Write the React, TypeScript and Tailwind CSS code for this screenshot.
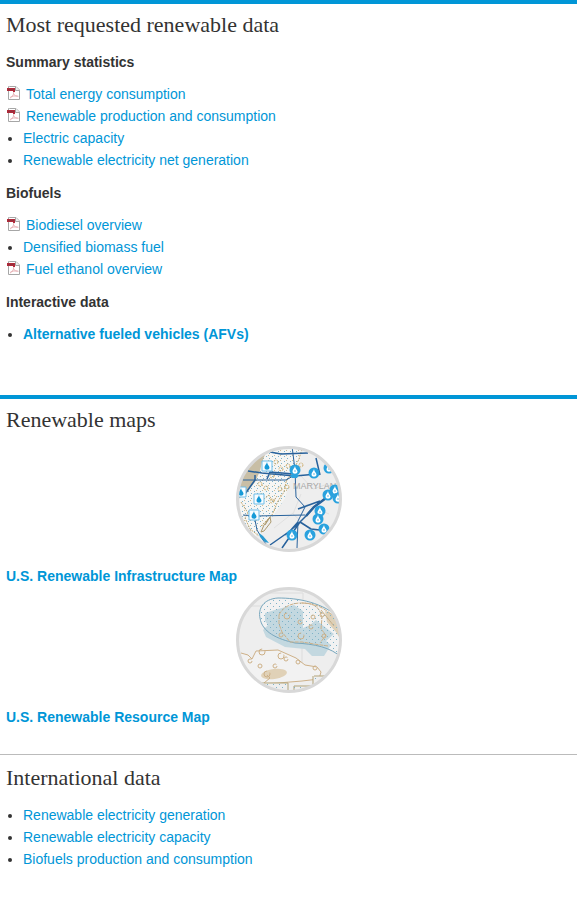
import type { ReactNode } from "react";

type LinkItem = { label: string; pdf?: boolean; bold?: boolean };

const summary: LinkItem[] = [
  { label: "Total energy consumption", pdf: true },
  { label: "Renewable production and consumption", pdf: true },
  { label: "Electric capacity" },
  { label: "Renewable electricity net generation" },
];
const biofuels: LinkItem[] = [
  { label: "Biodiesel overview", pdf: true },
  { label: "Densified biomass fuel" },
  { label: "Fuel ethanol overview", pdf: true },
];
const interactive: LinkItem[] = [{ label: "Alternative fueled vehicles (AFVs)", bold: true }];
const international: LinkItem[] = [
  { label: "Renewable electricity generation" },
  { label: "Renewable electricity capacity" },
  { label: "Biofuels production and consumption" },
];

function PdfIcon() {
  return (
    <svg className="h-4 w-4 shrink-0" viewBox="0 0 16 16" aria-hidden="true">
      <path d="M3.500.5h6.500l3.500 3.500v9.500h-11V.5z" fill="#fff" stroke="#a6a6a6" />
      <path d="M9.500.5v4h4" fill="#eee" stroke="#a6a6a6" />
      <path d="M4 12c2-.8 3.600-2.500 3.800-6M7.500 7.500c.8 2 2.200 2.800 5 2.800M4.500 11c2-1 4-1.200 7-1" fill="none" stroke="#e9b4b8" />
      <path d="M1 2h8v4H7V5H1z" fill="#b02a3a" />
      <path d="M2 3.500h6" stroke="#93303c" />
    </svg>
  );
}

function LinkList({ items }: { items: LinkItem[] }) {
  return (
    <ul>
      {items.map((item) => (
        <li key={item.label} className="flex items-center">
          {item.pdf ? (
            <span className="flex w-5 shrink-0">
              <PdfIcon />
            </span>
          ) : (
            <span className="flex w-[17px] shrink-0 pl-0.5">
              <span className="mt-0.5 h-1 w-1 rounded-full bg-[#333]" />
            </span>
          )}
          <a href="#" className={item.bold ? "font-bold text-[#0096d7]" : "text-[#0096d7]"}>
            {item.label}
          </a>
        </li>
      ))}
    </ul>
  );
}

function Heading({ children }: { children: ReactNode }) {
  return (
    <h2 className="font-['Liberation_Serif',serif] text-[22px] leading-7">{children}</h2>
  );
}

function Group({ title, items }: { title: string; items: LinkItem[] }) {
  return (
    <div>
      <h3 className="mb-2.5 font-bold">{title}</h3>
      <LinkList items={items} />
    </div>
  );
}

function MapLink({ label, children }: { label: string; children: ReactNode }) {
  return (
    <a href="#" className="font-bold leading-[21px] text-[#0096d7]">
      <span className="mb-3.5 flex justify-center">{children}</span>
      {label}
    </a>
  );
}

const flame = "M0-4C-.3-2-2.5-.5-2.500 1.500c0 3 5 3 5 0C2.500 0 .4-1 0-4z";
const plants = [[59, 24], [78, 27], [93, 22], [99, 44], [92, 49], [102, 52], [84, 65], [82, 73], [88, 83], [74, 89], [56, 89]];
const stations = [[31, 20], [5, 46], [23, 53], [18, 69]];
const infraRings = [[40, 16], [45, 23], [52, 20], [36, 30], [44, 43], [30, 42], [51, 41], [24, 38], [36, 55], [65, 19]];

function InfrastructureMap() {
  return (
    <svg className="size-[106px]" viewBox="0 0 106 106" role="img" aria-label="Infrastructure map preview">
      <defs>
        <clipPath id="infra-clip"><circle cx="53" cy="53" r="51" /></clipPath>
        <pattern id="infra-dots" width="6" height="5" patternUnits="userSpaceOnUse">
          <path d="M0 0h1v1H0zM3 2h1v1H3z" fill="#7db3ca" />
          <path d="M2 4h1v1H2z" fill="#cfbd98" />
        </pattern>
      </defs>
      <g clipPath="url(#infra-clip)">
        <path d="M0 0h106v106H0z" fill="#eee" />
        <path d="M65 30l12 13 12-4 17 3M65 48l-8 20 18 16 20 2M38 82l19-15M70 58l23 10" fill="none" stroke="#e0e0e0" />
        <path d="M30 0h37l-5 22-8 13-5 17-11 17-13 12-7 12H4V31h16z" fill="#f6f6f4" />
        <path d="M30 0h37l-5 22-8 13-5 17-11 17-13 12-7 12H4V31h16z" fill="url(#infra-dots)" />
        <path d="M2 28L30 6l-4 10-2 9-5 11-10 13-7 4z" fill="#c8bea5" />
        <path d="M66 3l-3 10-5 10-8 13-2 10-6 9-6 14-11 11M5 56l7 11-3 5 5 11 9 7M25 47l3 6 5-4 4 7 4-6" fill="none" stroke="#c2a873" strokeDasharray="2 1" />
        <path d="M34 71l-6 8-3 7 3-1 7-9-1-5-5 8" fill="none" stroke="#ac996d" />
        <g fill="none" stroke="#cdb072" strokeDasharray="2 1">
          {infraRings.map(([x, y]) => (
            <circle key={`${x}-${y}`} cx={x} cy={y} r="2" />
          ))}
        </g>
        <g fill="none" stroke="#28629c" strokeLinejoin="round">
          <path d="M34 6l11 2 27-1M12 25l14 2 33 3 22-2M31 33l3-7 24 2M80 12l4 17M9 48l10-14v-5" strokeWidth="1.5" />
          <path d="M7 34h43l9-5M56 0l3 24 1 27 9 10-7 14-1 27M7 69l13 1 49-1M19 74l2 10 6 10 6 8" />
          <path d="M90 52l-12 9-8 9-8 8-13 11M84 55l-22 8M62 76l-8 9-20 14M64 76l11 7 9 1M106 43l-17 10M64 76l-18 26" strokeWidth="1.5" />
          <path d="M90 52l-12 9-8 9" strokeWidth="2.5" />
        </g>
        <path d="M23 87l4 3 6 7-4-1-5-5z" fill="#299bd2" />
        <text x="57" y="43" fontSize="9" className="font-['Liberation_Sans',sans-serif] font-normal" fill="#a8a8a8">MARYLAND</text>
        {stations.map(([x, y]) => (
          <g key={`${x}-${y}`} transform={`translate(${x} ${y})`}>
            <path d="M-5-5H5V5H-5z" fill="#f7fcff" stroke="#6dbde9" />
            <path d={flame} fill="#159ad7" />
          </g>
        ))}
        {plants.map(([x, y]) => (
          <g key={`${x}-${y}`} transform={`translate(${x} ${y})`}>
            <circle r="5.5" fill="#2aa2de" />
            <path d={flame} fill="#fff" />
            <path d="M0 0v2" stroke="#65b9df" />
          </g>
        ))}
        <path d="M54 29h9l-2 3h-5z" fill="#2aa2de" />
      </g>
      <circle cx="53" cy="53" r="51.5" fill="none" stroke="#d8d8d8" strokeWidth="3" />
    </svg>
  );
}

const wells = [[51, 29], [64, 35], [77, 30], [86, 28], [65, 49], [75, 40], [88, 49], [45, 48], [26, 65], [14, 74], [24, 79], [39, 79], [45, 69], [50, 72], [62, 75], [79, 81], [31, 87]];
const basin = "M24 32c-2-10 3-20 18-21 20 0 45 4 64 22v37C91 55 67 58 49 51 35 46 26 42 24 32z";

function ResourceMap() {
  return (
    <svg className="size-[106px]" viewBox="0 0 106 106" role="img" aria-label="Resource map preview">
      <defs>
        <clipPath id="resource-clip"><circle cx="53" cy="53" r="51" /></clipPath>
        <pattern id="resource-dots" width="6" height="6" patternUnits="userSpaceOnUse">
          <path d="M1 1h1v1H1zM4 4h1v1H4z" fill="#7fb3c8" />
        </pattern>
      </defs>
      <g clipPath="url(#resource-clip)">
        <path d="M0 0h106v106H0z" fill="#eee" />
        <path d="M15 19h12M30 6h37v8M66 54v28l-6-3 22 10" fill="none" stroke="#dcdcdc" />
        <path d={basin} fill="#f2f2f2" />
        <path d="M29 26l13-4 16-4 9 6v17l7-3 6-5 18 14-8 7 5 4-7 11H76l-7-7-20-2-19-10-3-7 5-5-3-4z" fill="#c3d8e0" />
        <path d="M89 24l14 5 3 26-6-10-9-10z" fill="#ddd0b8" />
        <path d={basin} fill="url(#resource-dots)" />
        <path d="M24 31c-2-9 3-19 18-20 20 0 45 4 64 22M24 31c2 14 17 21 35 25 19 1 36 4 47 15" fill="none" stroke="#77a6bc" />
        <path d="M5 66l7 2 4 4 4-8 22-1 18 8 9 7 12 2 4 5-2 7-17 2-24 2-24 1-19-4z" fill="#f2f2f2" />
        <ellipse cx="38" cy="87" rx="13" ry="5" fill="#e0d1b7" transform="rotate(-8 38 87)" />
        <g fill="none" stroke="#cdb088">
          <path d="M5 66l7 2 4 4 4-8 22-1 18 8 9 7 12 2 4 5-2 7-17 2-24 2-24 1-19-4" />
          <path d="M43 28c3-7 11-12 22-12 13 0 22 4 31 12M43 28l0 9 3 8 8 10 12 0 12 2 14 2M66 16c14 0 18 6 20 14l-1 12 5 6-6 8" strokeDasharray="4 1" />
          {wells.map(([x, y], i) => (
            <circle key={`${x}-${y}`} cx={x} cy={y} r={i % 4 === 0 ? 3 : 2} strokeDasharray={i % 2 ? "10 3" : "14 3"} />
          ))}
          <path d="M31 88l3 3-6 5M85 23l13 16" />
        </g>
        <path d="M18 96h34v10H18zM78 89h20v17H58V99h19V89" fill="#eee" stroke="#b2a47b" />
        <path d="M18 96h34v10H18zM78 89h20v17H58V99h19z" fill="url(#resource-dots)" />
      </g>
      <circle cx="53" cy="53" r="51.5" fill="none" stroke="#d8d8d8" strokeWidth="3" />
    </svg>
  );
}

export default function App() {
  return (
    <main className="bg-white font-['Liberation_Sans',Arial,sans-serif] text-sm leading-[22px] text-[#333]">
      <section className="border-t-4 border-[#0096d7] px-1.5 pt-[7px] pb-[50px]">
        <Heading>Most requested renewable data</Heading>
        <div className="mt-3 flex flex-col gap-[11px]">
          <Group title="Summary statistics" items={summary} />
          <Group title="Biofuels" items={biofuels} />
          <Group title="Interactive data" items={interactive} />
        </div>
      </section>
      <section className="border-t-4 border-[#0096d7] px-1.5 pt-[7px] pb-[26px]">
        <Heading>Renewable maps</Heading>
        <div className="mt-3 flex flex-col">
          <MapLink label="U.S. Renewable Infrastructure Map"><InfrastructureMap /></MapLink>
          <MapLink label="U.S. Renewable Resource Map"><ResourceMap /></MapLink>
        </div>
      </section>
      <section className="border-t border-[#bbb] px-1.5 pt-[9px] pb-12">
        <Heading>International data</Heading>
        <div className="mt-3">
          <LinkList items={international} />
        </div>
      </section>
    </main>
  );
}
